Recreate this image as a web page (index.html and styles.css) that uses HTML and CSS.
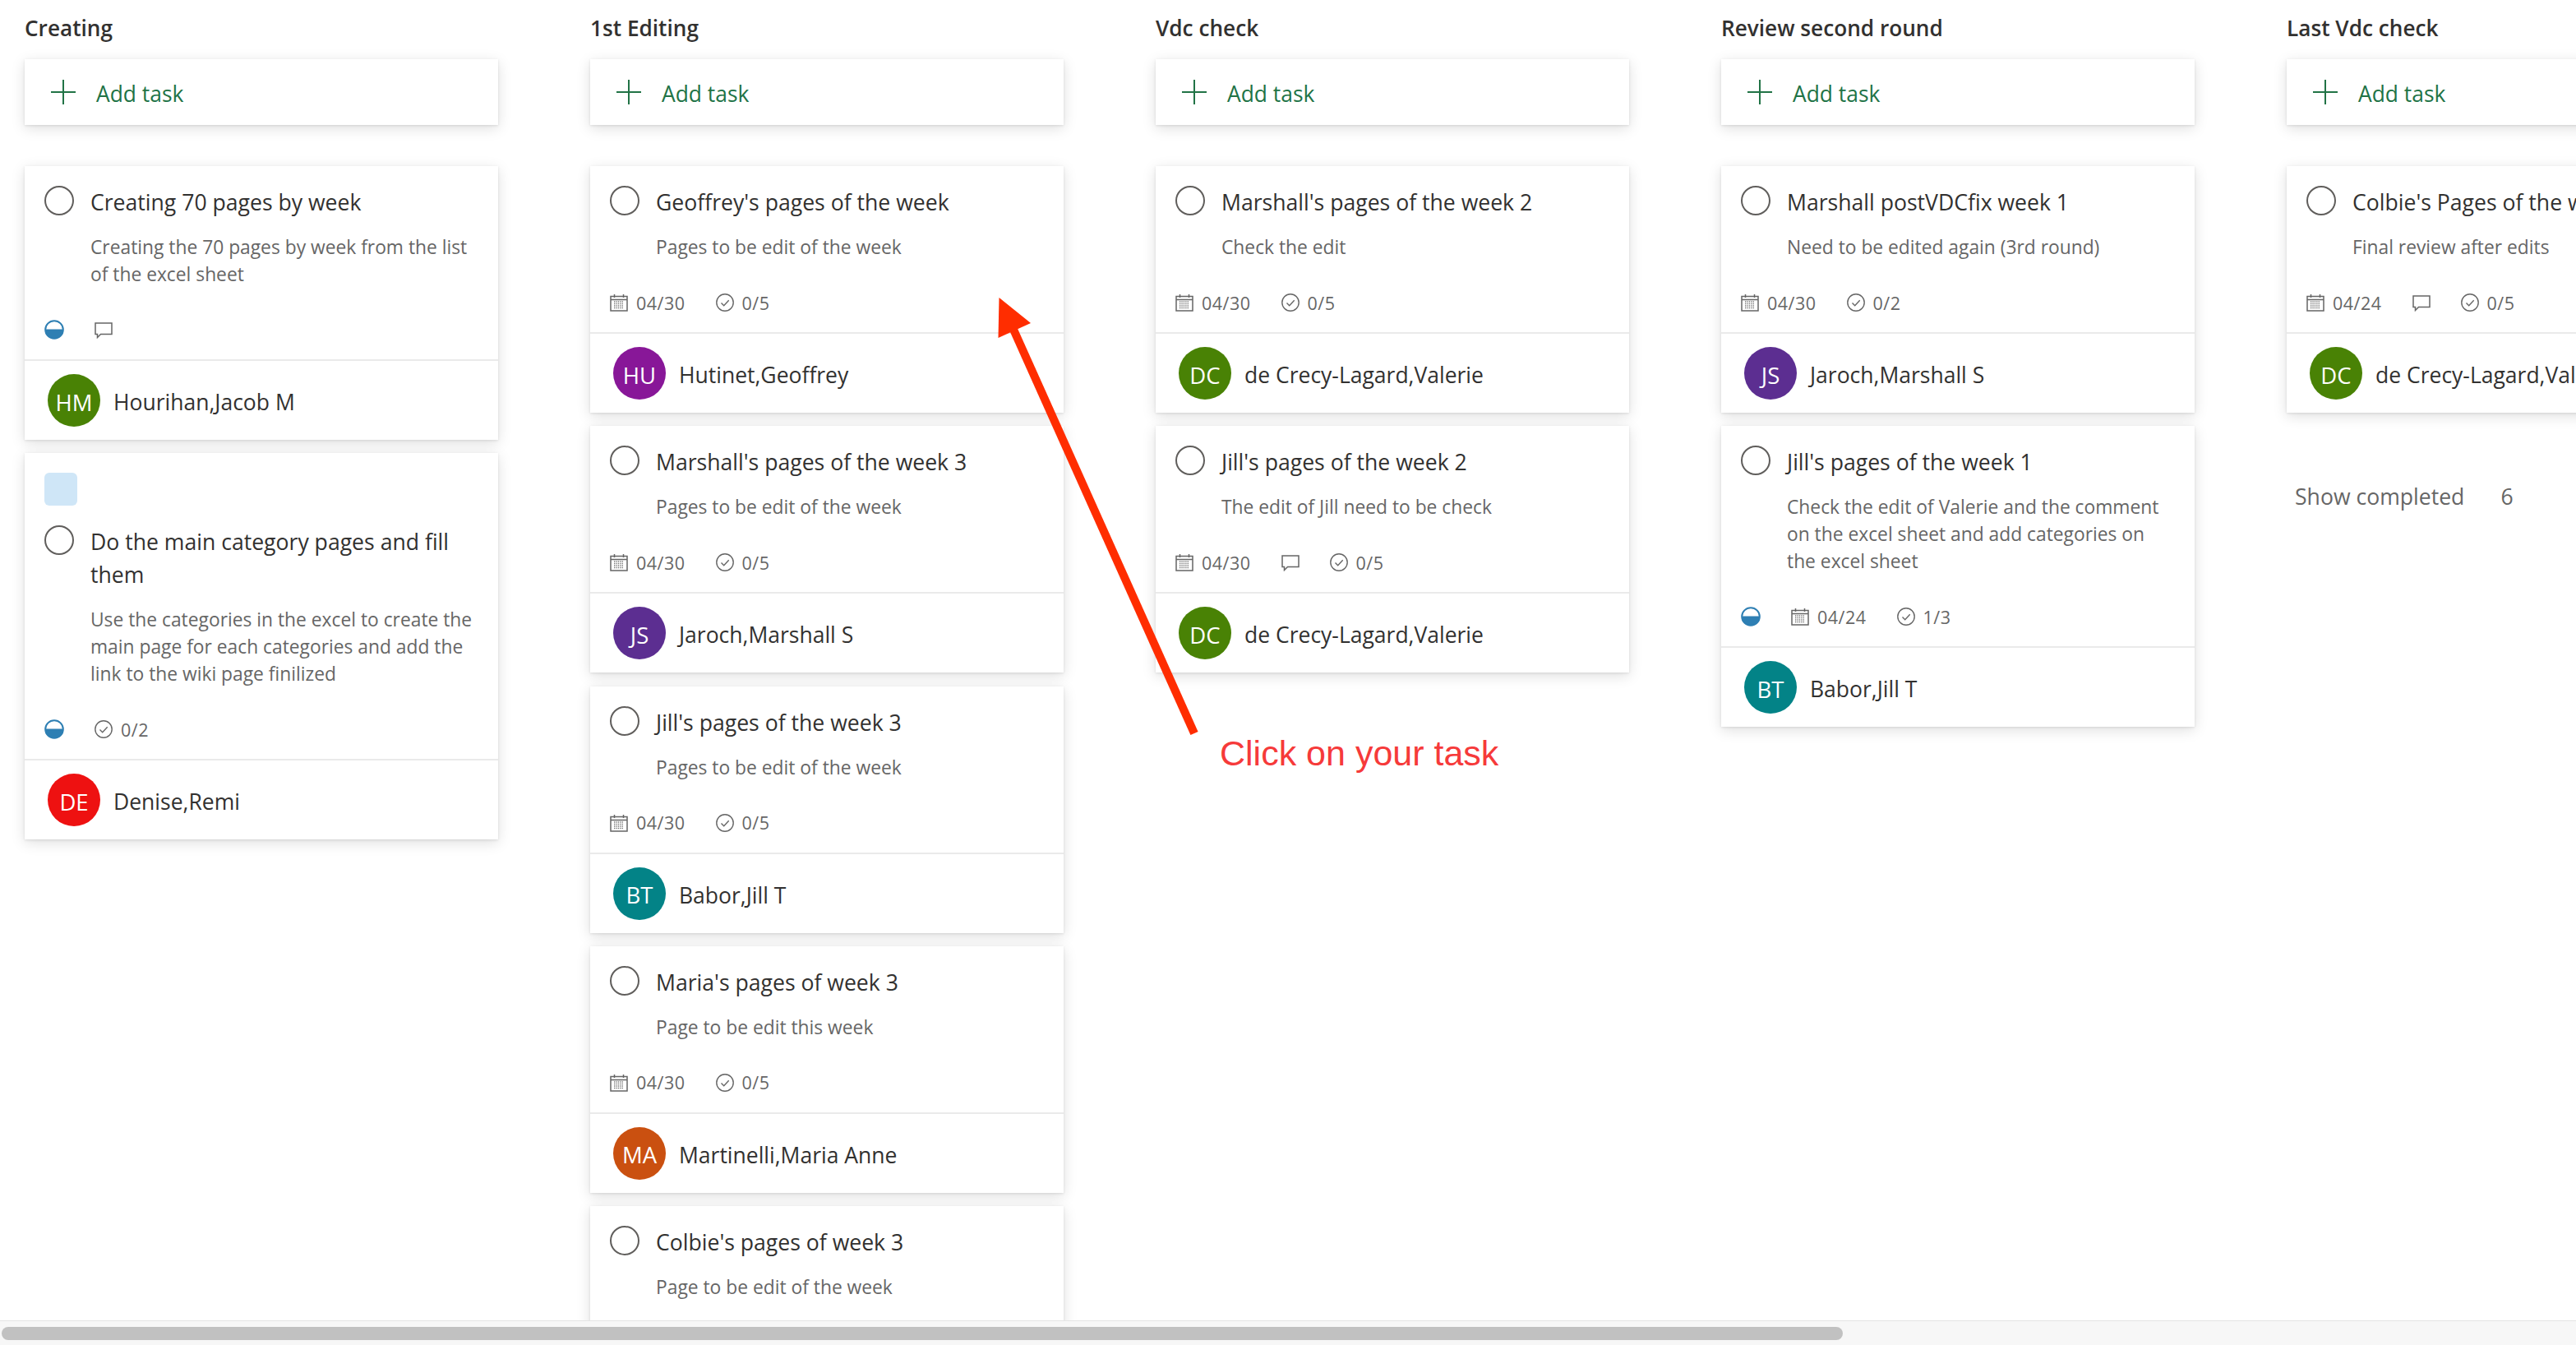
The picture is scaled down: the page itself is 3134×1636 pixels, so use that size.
FILE: index.html
```html
<!DOCTYPE html>
<html>
<head>
    <title>Board</title>
    <link rel="stylesheet" href="styles.css">
</head>
<body>
    <!-- icons used over and over on the cards -->
    <svg class="defs" width="0" height="0">
        <symbol id="ic-cal" viewBox="0 0 22 22">
            <path d="M1 3.5h20v17.500H1zM1 7.500h20M5.500 1v4M16.500 1v4" fill="none" stroke="#666" stroke-width="1.500"/>
            <path d="M5 10h12M5 12.500h12M5 15h12M5 17.500h12" fill="none" stroke="#777" stroke-width="1.300" stroke-dasharray="1.300 1.100"/>
        </symbol>
        <symbol id="ic-check" viewBox="0 0 22 22">
            <circle cx="11" cy="11" r="10.200" fill="none" stroke="#666" stroke-width="1.400"/>
            <path d="M6.500 11.500l3.200 3.200 6-6.500" fill="none" stroke="#666" stroke-width="1.400"/>
        </symbol>
        <symbol id="ic-comment" viewBox="0 0 22 22">
            <path d="M1 3h20v13.500H7.500L3.500 20.500v-4H1z" fill="none" stroke="#666" stroke-width="1.500"/>
        </symbol>
        <symbol id="ic-progress" viewBox="0 0 24 24">
            <circle cx="12" cy="12" r="10.800" fill="#fff" stroke="#2e7fb3" stroke-width="2"/>
            <path d="M1 11.500h22a11 11 0 0 1-22 1z" fill="#2e7fb3"/>
        </symbol>
        <symbol id="ic-plus" viewBox="0 0 30 30">
            <path d="M15 0v30M0 15h30" fill="none" stroke="#217346" stroke-width="2"/>
        </symbol>
    </svg>

    <div class="board">
        <!-- Creating -->
        <section class="column">
            <h2 class="col-title">Creating</h2>
            <div class="add-task"><svg class="plus"><use href="#ic-plus"/></svg><span class="add-text">Add task</span></div>
            <div class="tasks">
                <article class="card">
                    <div class="card-body">
                        <div class="head"><span class="circle"></span><h3 class="title">Creating 70 pages by week</h3></div>
                        <p class="desc">Creating the 70 pages by week from the list<br>of the excel sheet</p>
                        <div class="meta">
                            <svg class="ic-p"><use href="#ic-progress"/></svg>
                            <span class="item"><svg class="ic"><use href="#ic-comment"/></svg></span>
                        </div>
                    </div>
                    <div class="assignee"><span class="avatar green">HM</span><span class="name">Hourihan,Jacob M</span></div>
                </article>
                <article class="card">
                    <div class="card-body">
                        <div class="label"></div>
                        <div class="head"><span class="circle"></span><h3 class="title">Do the main category pages and fill<br>them</h3></div>
                        <p class="desc">Use the categories in the excel to create the<br>main page for each categories and add the<br>link to the wiki page finilized</p>
                        <div class="meta">
                            <svg class="ic-p"><use href="#ic-progress"/></svg>
                            <span class="item"><svg class="ic"><use href="#ic-check"/></svg>0/2</span>
                        </div>
                    </div>
                    <div class="assignee"><span class="avatar red">DE</span><span class="name">Denise,Remi</span></div>
                </article>
            </div>
        </section>

        <!-- 1st Editing -->
        <section class="column">
            <h2 class="col-title">1st Editing</h2>
            <div class="add-task"><svg class="plus"><use href="#ic-plus"/></svg><span class="add-text">Add task</span></div>
            <div class="tasks">
                <article class="card">
                    <div class="card-body">
                        <div class="head"><span class="circle"></span><h3 class="title">Geoffrey's pages of the week</h3></div>
                        <p class="desc">Pages to be edit of the week</p>
                        <div class="meta">
                            <span class="item"><svg class="ic"><use href="#ic-cal"/></svg>04/30</span>
                            <span class="item"><svg class="ic"><use href="#ic-check"/></svg>0/5</span>
                        </div>
                    </div>
                    <div class="assignee"><span class="avatar magenta">HU</span><span class="name">Hutinet,Geoffrey</span></div>
                </article>
                <article class="card">
                    <div class="card-body">
                        <div class="head"><span class="circle"></span><h3 class="title">Marshall's pages of the week 3</h3></div>
                        <p class="desc">Pages to be edit of the week</p>
                        <div class="meta">
                            <span class="item"><svg class="ic"><use href="#ic-cal"/></svg>04/30</span>
                            <span class="item"><svg class="ic"><use href="#ic-check"/></svg>0/5</span>
                        </div>
                    </div>
                    <div class="assignee"><span class="avatar purple">JS</span><span class="name">Jaroch,Marshall S</span></div>
                </article>
                <article class="card">
                    <div class="card-body">
                        <div class="head"><span class="circle"></span><h3 class="title">Jill's pages of the week 3</h3></div>
                        <p class="desc">Pages to be edit of the week</p>
                        <div class="meta">
                            <span class="item"><svg class="ic"><use href="#ic-cal"/></svg>04/30</span>
                            <span class="item"><svg class="ic"><use href="#ic-check"/></svg>0/5</span>
                        </div>
                    </div>
                    <div class="assignee"><span class="avatar teal">BT</span><span class="name">Babor,Jill T</span></div>
                </article>
                <article class="card">
                    <div class="card-body">
                        <div class="head"><span class="circle"></span><h3 class="title">Maria's pages of week 3</h3></div>
                        <p class="desc">Page to be edit this week</p>
                        <div class="meta">
                            <span class="item"><svg class="ic"><use href="#ic-cal"/></svg>04/30</span>
                            <span class="item"><svg class="ic"><use href="#ic-check"/></svg>0/5</span>
                        </div>
                    </div>
                    <div class="assignee"><span class="avatar orange">MA</span><span class="name">Martinelli,Maria Anne</span></div>
                </article>
                <!-- this one goes under the scrollbar -->
                <article class="card card-cut">
                    <div class="card-body">
                        <div class="head"><span class="circle"></span><h3 class="title">Colbie's pages of week 3</h3></div>
                        <p class="desc">Page to be edit of the week</p>
                    </div>
                </article>
            </div>
        </section>

        <!-- Vdc check -->
        <section class="column">
            <h2 class="col-title">Vdc check</h2>
            <div class="add-task"><svg class="plus"><use href="#ic-plus"/></svg><span class="add-text">Add task</span></div>
            <div class="tasks">
                <article class="card">
                    <div class="card-body">
                        <div class="head"><span class="circle"></span><h3 class="title">Marshall's pages of the week 2</h3></div>
                        <p class="desc">Check the edit</p>
                        <div class="meta">
                            <span class="item"><svg class="ic"><use href="#ic-cal"/></svg>04/30</span>
                            <span class="item"><svg class="ic"><use href="#ic-check"/></svg>0/5</span>
                        </div>
                    </div>
                    <div class="assignee"><span class="avatar green">DC</span><span class="name">de Crecy-Lagard,Valerie</span></div>
                </article>
                <article class="card">
                    <div class="card-body">
                        <div class="head"><span class="circle"></span><h3 class="title">Jill's pages of the week 2</h3></div>
                        <p class="desc">The edit of Jill need to be check</p>
                        <div class="meta">
                            <span class="item"><svg class="ic"><use href="#ic-cal"/></svg>04/30</span>
                            <span class="item"><svg class="ic"><use href="#ic-comment"/></svg></span>
                            <span class="item"><svg class="ic"><use href="#ic-check"/></svg>0/5</span>
                        </div>
                    </div>
                    <div class="assignee"><span class="avatar green">DC</span><span class="name">de Crecy-Lagard,Valerie</span></div>
                </article>
            </div>
        </section>

        <!-- Review second round -->
        <section class="column">
            <h2 class="col-title">Review second round</h2>
            <div class="add-task"><svg class="plus"><use href="#ic-plus"/></svg><span class="add-text">Add task</span></div>
            <div class="tasks">
                <article class="card">
                    <div class="card-body">
                        <div class="head"><span class="circle"></span><h3 class="title">Marshall postVDCfix week 1</h3></div>
                        <p class="desc">Need to be edited again (3rd round)</p>
                        <div class="meta">
                            <span class="item"><svg class="ic"><use href="#ic-cal"/></svg>04/30</span>
                            <span class="item"><svg class="ic"><use href="#ic-check"/></svg>0/2</span>
                        </div>
                    </div>
                    <div class="assignee"><span class="avatar purple">JS</span><span class="name">Jaroch,Marshall S</span></div>
                </article>
                <article class="card">
                    <div class="card-body">
                        <div class="head"><span class="circle"></span><h3 class="title">Jill's pages of the week 1</h3></div>
                        <p class="desc">Check the edit of Valerie and the comment<br>on the excel sheet and add categories on<br>the excel sheet</p>
                        <div class="meta">
                            <svg class="ic-p"><use href="#ic-progress"/></svg>
                            <span class="item"><svg class="ic"><use href="#ic-cal"/></svg>04/24</span>
                            <span class="item"><svg class="ic"><use href="#ic-check"/></svg>1/3</span>
                        </div>
                    </div>
                    <div class="assignee"><span class="avatar teal">BT</span><span class="name">Babor,Jill T</span></div>
                </article>
            </div>
        </section>

        <!-- Last Vdc check, runs off the right edge -->
        <section class="column">
            <h2 class="col-title">Last Vdc check</h2>
            <div class="add-task"><svg class="plus"><use href="#ic-plus"/></svg><span class="add-text">Add task</span></div>
            <div class="tasks">
                <article class="card">
                    <div class="card-body">
                        <div class="head"><span class="circle"></span><h3 class="title">Colbie's Pages of the week 4</h3></div>
                        <p class="desc">Final review after edits</p>
                        <div class="meta">
                            <span class="item"><svg class="ic"><use href="#ic-cal"/></svg>04/24</span>
                            <span class="item"><svg class="ic"><use href="#ic-comment"/></svg></span>
                            <span class="item"><svg class="ic"><use href="#ic-check"/></svg>0/5</span>
                        </div>
                    </div>
                    <div class="assignee"><span class="avatar green">DC</span><span class="name">de Crecy-Lagard,Valerie</span></div>
                </article>
            </div>
            <div class="completed"><span>Show completed</span><span>6</span></div>
        </section>
    </div>

    <div class="scrollbar"><div class="thumb"></div></div>

    <!-- annotation drawn on top of the screenshot -->
    <svg class="arrow" viewBox="0 0 300 560">
        <path d="M253 532L30 34" fill="none" stroke="#ff2d00" stroke-width="10"/>
        <polygon points="15.500,2 14.500,51 54,33" fill="#ff2d00"/>
    </svg>
    <div class="note">Click on your task</div>
</body>
</html>
```

FILE: styles.css
```css
body{
    margin: 0;
    height: 100vh;
    overflow: hidden;
    display: flex;
    flex-direction: column;
    background: #fff;
    color: #323130;
    font-family: "Open Sans", "Noto Sans", sans-serif;
}
.defs{
    position: absolute;
}

/* board */
.board{
    flex: 1;
    min-height: 0;
    display: flex;
    gap: 112px;
    padding: 14px 0 0 30px;
    overflow: hidden;
}
.column{
    flex: 0 0 576px;
    width: 576px;
}
.col-title{
    margin: 0 0 18px;
    font-size: 26.200px;
    line-height: 40px;
    font-weight: 600;
    white-space: nowrap;
}
.add-task{
    height: 80px;
    display: flex;
    align-items: center;
    padding-left: 32px;
    gap: 25px;
    background: #fff;
    color: #217346;
    font-size: 26.400px;
    box-shadow: 0 4px 16px rgba(0,0,0,.13), 0 1px 3px rgba(0,0,0,.1);
}
.add-text{
    padding-top: 4px;
}
.plus{
    width: 30px;
    height: 30px;
}
.tasks{
    margin-top: 50px;
    display: flex;
    flex-direction: column;
    gap: 16.300px;
}

/* cards */
.card{
    background: #fff;
    box-shadow: 0 4px 16px rgba(0,0,0,.13), 0 1px 3px rgba(0,0,0,.1);
}
.card-cut{
    min-height: 300px;
}
.card-body{
    padding: 22px 24px 20px;
}
.label{
    width: 40px;
    height: 40px;
    margin: 2px 0 22px;
    border-radius: 6px;
    background: #cfe6f7;
}
.head{
    display: flex;
    gap: 20px;
}
.circle{
    flex: none;
    width: 36px;
    height: 36px;
    margin-top: 2px;
    box-sizing: border-box;
    border: 2px solid #605e5c;
    border-radius: 50%;
}
.title{
    margin: 0;
    padding-top: 2px;
    font-size: 26.600px;
    line-height: 40px;
    font-weight: 400;
    white-space: nowrap;
}
.desc{
    margin: 18px 0 0 56px;
    font-size: 22.800px;
    line-height: 33px;
    color: #666;
    white-space: nowrap;
}
.meta{
    height: 32px;
    margin-top: 35px;
    display: flex;
    align-items: center;
    gap: 37px;
    font-size: 21.500px;
    color: #666;
    white-space: nowrap;
}
.item{
    display: flex;
    align-items: center;
    gap: 10px;
    letter-spacing: .5px;
}
.ic{
    width: 22px;
    height: 22px;
}
.ic-p{
    width: 24px;
    height: 24px;
}
.assignee{
    display: flex;
    align-items: center;
    gap: 16px;
    padding: 16px 28px;
    border-top: 2px solid #eaeaea;
}
.avatar{
    flex: none;
    width: 64px;
    height: 64px;
    padding-top: 4px;
    box-sizing: border-box;
    border-radius: 50%;
    display: flex;
    align-items: center;
    justify-content: center;
    color: #fff;
    font-size: 27.500px;
}
.green{ background: #498205; }
.red{ background: #ee1111; }
.magenta{ background: #881798; }
.purple{ background: #5c2e91; }
.teal{ background: #038387; }
.orange{ background: #ca5010; }
.name{
    padding-top: 4px;
    font-size: 26.500px;
    white-space: nowrap;
}
.completed{
    display: flex;
    gap: 44px;
    margin: 82px 0 0 10px;
    font-size: 26.600px;
    line-height: 40px;
    color: #666;
}

/* fake horizontal scrollbar of the window */
.scrollbar{
    flex: none;
    height: 30px;
    box-sizing: border-box;
    padding: 7px 0 0 2px;
    background: #f7f7f7;
    border-top: 1px solid #e4e4e4;
}
.thumb{
    width: 2240px;
    height: 16px;
    border-radius: 8px;
    background: #c1c1c1;
}

/* red annotation */
.arrow{
    position: absolute;
    left: 1200px;
    top: 360px;
    width: 300px;
    height: 560px;
}
.note{
    position: absolute;
    left: 1484px;
    top: 888px;
    font-family: "Liberation Sans", Arial, sans-serif;
    font-size: 43px;
    line-height: 56px;
    color: #f63a3a;
    white-space: nowrap;
}
```
